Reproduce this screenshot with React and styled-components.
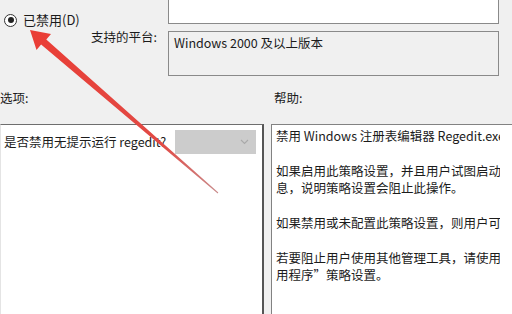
import React from "react";
import styled, { createGlobalStyle } from "styled-components";

const Global = createGlobalStyle`
  html, body { margin: 0; padding: 0; background: #f0f0f0; }
  body { width: 512px; height: 314px; overflow: hidden; }
  #root { width: 512px; height: 314px; overflow: hidden; position: relative; }
`;

const Page = styled.div`
  width: 512px;
  height: 314px;
  overflow: hidden;
  position: relative;
  background: #f0f0f0;
  font-family: "Noto Sans CJK SC", "Noto Sans", sans-serif;
  font-size: 12.5px;
  color: #1b1b1b;
`;

const TopArea = styled.div`
  display: grid;
  grid-template-columns: 168px 331px;
  grid-template-rows: 44px 45px;
  row-gap: 7px;
  margin-top: -20px;
`;

const LeftCol = styled.div`
  grid-column: 1;
  grid-row: 1 / span 2;
  display: flex;
  flex-direction: column;
  padding-top: 32px;
`;

const RadioRow = styled.div`
  display: flex;
  align-items: center;
  height: 16px;
  padding-left: 4px;
  gap: 6px;
  line-height: 16px;
  font-size: 13px;
`;

const RadioCircle = styled.span`
  width: 11px;
  height: 11px;
  border: 1px solid #333;
  border-radius: 50%;
  display: flex;
  align-items: center;
  justify-content: center;
  background: #fff;
  &::after {
    content: "";
    width: 6px;
    height: 6px;
    border-radius: 50%;
    background: #222;
  }
`;

const FieldLabel = styled.div`
  margin-top: 1px;
  line-height: 16px;
  text-align: right;
  padding-right: 11px;
`;

const Box = styled.div`
  grid-column: 2;
  grid-row: ${(p) => p.$row};
  background: ${(p) => (p.$readonly ? "#f0f0f0" : "#ffffff")};
  border: 1px solid #8a8a8a;
  padding: 3px 5px;
  line-height: 16px;
  box-sizing: border-box;
`;

const LabelsRow = styled.div`
  display: flex;
  margin-top: 13px;
  height: 17px;
  line-height: 17px;
`;

const SectionLabel = styled.div`
  width: ${(p) => p.$w}px;
`;

const Panels = styled.div`
  display: flex;
  margin-top: 18px;
  gap: 7px;
  height: 200px;
`;

const OptionsPanel = styled.div`
  width: 264px;
  flex: none;
  box-sizing: border-box;
  background: #fff;
  border-top: 1px solid #6e6e6e;
  border-left: 1px solid #e4e4e4;
  border-right: 2px solid #555;
  padding: 5px 5px 0 3px;
`;

const OptionRow = styled.div`
  display: flex;
  align-items: center;
  height: 24px;
`;

const OptionText = styled.span`
  white-space: nowrap;
  line-height: 16px;
`;

const Dropdown = styled.div`
  margin-left: 9px;
  width: 81px;
  height: 24px;
  background: #cccccc;
  display: flex;
  align-items: center;
  justify-content: flex-end;
  padding-right: 7px;
  box-sizing: border-box;
`;

const HelpPanel = styled.div`
  width: 260px;
  flex: none;
  box-sizing: border-box;
  background: #fff;
  border-top: 1px solid #828282;
  border-left: 1px solid #828282;
  padding: 2px 0 0 4px;
`;

const HelpText = styled.div`
  width: 224px;
  line-height: 17.4px;
  white-space: nowrap;
  overflow: hidden;
`;

const Para = styled.p`
  margin: 0 0 17.4px 0;
`;

const ArrowLayer = styled.svg`
  position: absolute;
  left: 0;
  top: 0;
  pointer-events: none;
`;

const Chevron = () => (
  <svg width="9" height="6" viewBox="0 0 9 6">
    <path d="M1 1 L4.5 4.5 L8 1" fill="none" stroke="#a9a9a9" strokeWidth="1.1" />
  </svg>
);

export default function App() {
  return (
    <>
      <Global />
      <Page>
        <TopArea>
          <LeftCol>
            <RadioRow>
              <RadioCircle />
              <span>已禁用(D)</span>
            </RadioRow>
            <FieldLabel>支持的平台:</FieldLabel>
          </LeftCol>
          <Box $row={1} />
          <Box $row={2} $readonly>
            Windows 2000 及以上版本
          </Box>
        </TopArea>
        <LabelsRow>
          <SectionLabel $w={274}>选项:</SectionLabel>
          <SectionLabel $w={100}>帮助:</SectionLabel>
        </LabelsRow>
        <Panels>
          <OptionsPanel>
            <OptionRow>
              <OptionText>是否禁用无提示运行 regedit?</OptionText>
              <Dropdown>
                <Chevron />
              </Dropdown>
            </OptionRow>
          </OptionsPanel>
          <HelpPanel>
            <HelpText>
              <Para>禁用 Windows 注册表编辑器 Regedit.exe。</Para>
              <Para>
                如果启用此策略设置，并且用户试图启动 Regedit.exe，则会出现一条消
                <br />
                息，说明策略设置会阻止此操作。
              </Para>
              <Para>如果禁用或未配置此策略设置，则用户可以正常运行 Regedit.exe。</Para>
              <Para>
                若要阻止用户使用其他管理工具，请使用“只运行指定的 Windows 应
                <br />
                用程序”策略设置。
              </Para>
            </HelpText>
          </HelpPanel>
        </Panels>
        <ArrowLayer width="512" height="314" viewBox="0 0 512 314">
          <defs>
            <linearGradient id="ag" x1="30" y1="30" x2="218" y2="193" gradientUnits="userSpaceOnUse">
              <stop offset="0" stopColor="#ea3d35" />
              <stop offset="0.7" stopColor="#e14a45" />
              <stop offset="1" stopColor="#c98c8c" />
            </linearGradient>
          </defs>
          <polygon
            points="30,30 51,34 46.3,39.4 218.3,192.6 217.7,193.4 41.1,44.6 36.5,50"
            fill="url(#ag)"
          />
        </ArrowLayer>
      </Page>
    </>
  );
}
